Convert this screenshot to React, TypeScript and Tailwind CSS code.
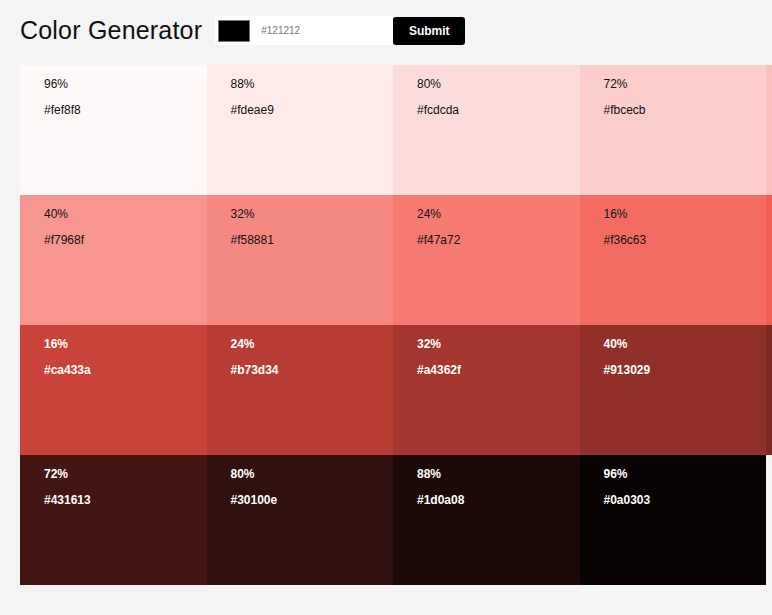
import React from 'react';

type Swatch = { weight: number; hex: string; shade: boolean };

// tints, base, shades of #f15044
const tints = ['#fef8f8', '#fdeae9', '#fcdcda', '#fbcecb', '#fac0bc', '#f9b2ad', '#f8a49e', '#f7968f', '#f58881', '#f47a72', '#f36c63', '#f25e53'];
const shades = ['#de4a3f', '#ca433a', '#b73d34', '#a4362f', '#913029', '#7d2a23', '#6a231e', '#571d18', '#431613', '#30100e', '#1d0a08', '#0a0303'];

const swatches: Swatch[] = [
  ...tints.map((hex, i) => ({ weight: 96 - i * 8, hex, shade: false })),
  { weight: 0, hex: '#f15044', shade: true },
  ...shades.map((hex, i) => ({ weight: 8 + i * 8, hex, shade: true })),
];

const App: React.FC = () => {
  return (
    <div className="min-h-screen w-full overflow-hidden bg-[#f4f4f4] font-['Liberation_Sans',Arial,sans-serif]">
      {/* Header */}
      <header className="flex items-center h-[65px] px-5 pb-[4px]">
        <h1 className="text-[25px] leading-none text-[#111] tracking-[0.2px]">Color Generator</h1>
        <form className="flex items-center ml-[13px]" onSubmit={e => e.preventDefault()}>
          <div className="flex items-center bg-white h-[29px] w-[178px] pl-[3px]">
            <div className="w-[32px] h-[22px] border border-[#767676] bg-black" />
            <input
              className="ml-[11px] w-[120px] text-[10px] outline-none placeholder:text-[#777]"
              placeholder="#121212"
            />
          </div>
          <button className="h-[28px] w-[72px] bg-black text-white text-[12px] font-bold rounded-[3px]">
            Submit
          </button>
        </form>
      </header>

      {/* Colors */}
      <section className="grid grid-cols-[repeat(7,186.5px)] pl-5">
        {swatches.map(s => (
          <article
            key={`${s.shade ? 's' : 't'}-${s.weight}`}
            className={`h-[130px] px-6 pt-[12px] text-[12px] ${s.shade ? 'text-white font-bold' : 'text-[#111]'}`}
            style={{ backgroundColor: s.hex }}
          >
            <p className="leading-[14px]">{s.weight}%</p>
            <p className="leading-[14px] mt-[12px]">{s.hex}</p>
          </article>
        ))}
      </section>
    </div>
  );
};

export default App;
